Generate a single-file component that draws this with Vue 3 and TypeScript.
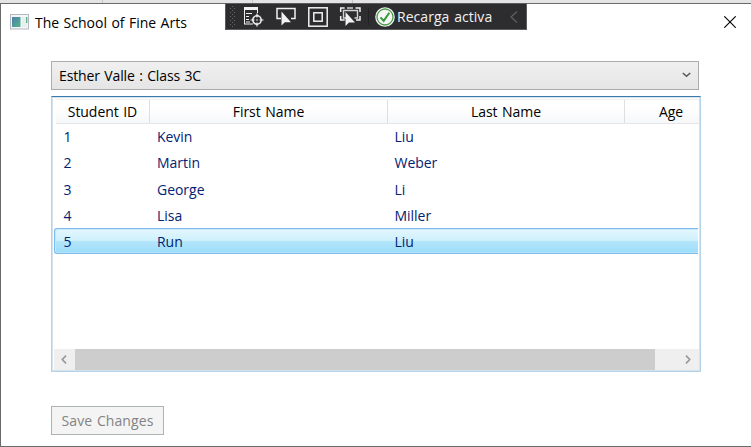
<script setup lang="ts">
import { ref } from 'vue'

interface Student {
  id: number
  first: string
  last: string
}

const students: Student[] = [
  { id: 1, first: 'Kevin', last: 'Liu' },
  { id: 2, first: 'Martin', last: 'Weber' },
  { id: 3, first: 'George', last: 'Li' },
  { id: 4, first: 'Lisa', last: 'Miller' },
  { id: 5, first: 'Run', last: 'Liu' },
]
const selected = ref(5)
</script>

<template>
  <div class="desktop">
    <div class="window">
      <header class="titlebar">
        <svg class="app-icon" width="19" height="16" viewBox="0 0 19 16">
          <defs>
            <linearGradient id="pane" x1="0" y1="0" x2="1" y2="1">
              <stop offset="0" stop-color="#4a7fae" />
              <stop offset="1" stop-color="#57b586" />
            </linearGradient>
          </defs>
          <rect x=".5" y=".5" width="18" height="14.5" fill="#f4f5f7" stroke="#b4b8c0" />
          <rect x="2" y="3" width="8.5" height="10" fill="url(#pane)" />
          <rect x="12" y="3" width="5" height="10" fill="#e9eeee" />
          <rect x="16" y="3" width="1.4" height="6" fill="#62b48d" />
        </svg>
        <h1>The School of Fine Arts</h1>
        <svg class="close" width="12" height="12" viewBox="0 0 12 12">
          <path d="M.3 .3 11.7 11.7M11.7 .3 .3 11.7" stroke="#000" stroke-width="1.1" />
        </svg>
      </header>

      <main>
        <div class="combo">
          <span>Esther Valle : Class 3C</span>
          <svg width="9" height="6" viewBox="0 0 9 6">
            <path d="M.8 1 4.500 4.300 8.200 1" fill="none" stroke="#5a5a5a" stroke-width="1.6" />
          </svg>
        </div>

        <section class="list">
          <div class="grid head">
            <div>Student ID</div>
            <div>First Name</div>
            <div>Last Name</div>
            <div>Age</div>
          </div>
          <div class="rows">
            <div
              v-for="s in students"
              :key="s.id"
              class="row"
              :class="{ selected: s.id === selected }"
              @click="selected = s.id"
            >
              <span>{{ s.id }}</span>
              <span>{{ s.first }}</span>
              <span>{{ s.last }}</span>
            </div>
          </div>
          <div class="scroll">
            <div class="arrow">
              <svg width="6" height="9" viewBox="0 0 6 9">
                <path d="M5 .6 1.3 4.5 5 8.4" fill="none" stroke="#999" stroke-width="1.7" />
              </svg>
            </div>
            <div class="thumb"></div>
            <div class="arrow end">
              <svg width="6" height="9" viewBox="0 0 6 9">
                <path d="M1 .6 4.7 4.5 1 8.4" fill="none" stroke="#999" stroke-width="1.7" />
              </svg>
            </div>
          </div>
        </section>

        <button class="save" disabled>Save Changes</button>
      </main>
    </div>

    <div class="debugbar">
      <svg class="tools" width="150" height="25" viewBox="0 0 150 25">
        <defs>
          <pattern id="grip" width="4" height="4" patternUnits="userSpaceOnUse">
            <rect width="1" height="1" fill="#66666a" />
            <rect x="2" y="2" width="1" height="1" fill="#66666a" />
          </pattern>
        </defs>
        <rect x="3" y="2" width="7" height="21" fill="url(#grip)" />
        <!-- live visual tree -->
        <g fill="none" stroke="#f1f1f1">
          <path d="M18 4.5h14" stroke-width="3" />
          <path d="M18.5 5v15M18 20h9M31.5 5v4" />
          <path d="M20 9.5h6M20 12.5h3M20 15.5h3M20 18h4" stroke-width="1" />
          <circle cx="31" cy="16" r="4.2" stroke-width="1.5" />
          <path d="M31 9.5v4M31 18.500v4M24.500 16h4M33.500 16h4" stroke-width="1.2" />
          <circle cx="31" cy="16" r=".8" fill="#f1f1f1" stroke="none" />
        </g>
        <!-- element picker -->
        <path d="M55 14.500h-4V4.500h18v10h-4" fill="none" stroke="#f1f1f1" stroke-width="1.5" />
        <path d="M55.500 7.500v14l3.300-3.300h6.200z" fill="#f1f1f1" />
        <!-- layout adorners -->
        <rect x="82.800" y="3.800" width="18.400" height="18.400" fill="none" stroke="#f1f1f1" stroke-width="1.500" />
        <rect x="87.800" y="8.800" width="8.400" height="8.400" fill="none" stroke="#f1f1f1" stroke-width="1.500" />
        <!-- focus tracking -->
        <path d="M114.700 8V4h4M129.500 4h4.500v4M114.700 12v4h4M134 12v4H130" fill="none" stroke="#f1f1f1" stroke-width="1.500" />
        <path d="M120 14h-2.500V6.500h14V14h-3M121 4h6" fill="none" stroke="#d2d2d2" stroke-width="1.400" />
        <path d="M119.500 8v14l3.500-3.500h6z" fill="#f1f1f1" />
        <path d="M142.500 4v17" stroke="#222224" />
      </svg>
      <svg class="check" width="20" height="20" viewBox="0 0 20 20">
        <circle cx="10" cy="10" r="9.800" fill="#f1f1f1" />
        <circle cx="10" cy="10" r="8" fill="#f6f6f6" stroke="#4a9f4a" stroke-width="1.300" />
        <path d="M5.500 10.300 8.700 13.800 14.300 5.800" fill="none" stroke="#339a35" stroke-width="2" />
      </svg>
      <span class="status">Recarga activa</span>
      <svg class="collapse" width="8" height="12" viewBox="0 0 8 12">
        <path d="M7 .5 1 6l6 5.500" fill="none" stroke="#606064" stroke-width="1.200" />
      </svg>
    </div>
  </div>
</template>

<style>
body {
  margin: 0;
  overflow: hidden;
}
</style>

<style scoped>
* {
  box-sizing: border-box;
}
.desktop {
  position: relative;
  width: 751px;
  height: 447px;
  padding-top: 3px;
  background:
    linear-gradient(#c6c6c6, #c6c6c6) 102px 0 / 1px 3px no-repeat,
    linear-gradient(#c6c6c6, #c6c6c6) 252px 0 / 1px 3px no-repeat,
    linear-gradient(#c6c6c6, #c6c6c6) 352px 0 / 1px 3px no-repeat,
    #e4e4e4;
  font: 14px/20px "Open Sans", "Noto Sans", sans-serif;
  color: #000;
}
.window {
  height: 444px;
  background: #fff;
  border: 1px solid #6a6a6a;
  border-right: 0;
}
.titlebar {
  display: flex;
  align-items: center;
  height: 36px;
  padding: 0 15px 0 9px;
}
.app-icon {
  margin-top: -1px;
}
h1 {
  margin: 1px 0 0 6px;
  font-size: 14px;
  font-weight: 400;
  line-height: 20px;
  word-spacing: 0.8px;
}
.close {
  margin-left: auto;
}
main {
  padding: 21px 0 0 50px;
}
.combo {
  display: flex;
  align-items: center;
  justify-content: space-between;
  width: 648px;
  height: 29px;
  padding: 0 7px 0 7px;
  border: 1px solid #acacac;
  background: linear-gradient(#f0f0f0, #e5e5e5);
  letter-spacing: -0.12px;
  word-spacing: 0.9px;
}
.combo svg {
  margin-top: -2px;
}
.list {
  width: 650px;
  height: 276px;
  margin-top: 6px;
  padding: 2px 1px 0 2px;
  border: 1px solid #b5d3e7;
  border-top-color: #3d7bad;
  box-shadow: inset 0 0 0 1px #d3e2ec;
  display: flex;
  flex-direction: column;
}
.grid {
  display: grid;
  grid-template-columns: 94px 238px 237px 93px;
}
.head {
  width: 643px;
  height: 25px;
  margin-left: 2px;
  overflow: hidden;
  border-top: 1px solid #f0f0f0;
  border-bottom: 1px solid #e3e5e8;
  background: linear-gradient(#fff 30%, #f6f7f9);
  letter-spacing: -0.05px;
  word-spacing: 1px;
}
.head > div {
  padding-top: 2px;
  text-align: center;
  border-right: 1px solid #dedfe1;
}
.rows {
  flex: 1;
}
.row {
  display: grid;
  grid-template-columns: 93.5px 237.5px 1fr;
  height: 26.25px;
  padding: 3px 0 0 9.5px;
  color: #042271;
  letter-spacing: -0.03px;
}
.row.selected {
  height: 26px;
  margin: -1px 1px 0 0;
  padding: 3px 0 0 8.5px;
  border: 1px solid #7ebbed;
  border-right: 0;
  border-radius: 3px 0 0 3px;
  box-shadow: inset 1px 1px #c9e9f8, inset 0 -1px #b9e4f8;
  background: linear-gradient(#e2f6fd 0 5%, #ccf0fc 50%, #b5e6fa 50%, #9bddfb);
}
.scroll {
  display: flex;
  height: 21px;
  width: 645px;
  margin-bottom: 1px;
  background: #efefef;
}
.arrow {
  display: flex;
  align-items: center;
  justify-content: center;
  width: 21px;
  padding-right: 2px;
}
.arrow.end {
  margin-left: auto;
}
.thumb {
  width: 580px;
  background: #cdcdcd;
}
.save {
  display: block;
  width: 113px;
  height: 29px;
  margin-top: 34px;
  padding: 0;
  border: 1px solid #adb2b5;
  background: #f4f4f4;
  color: #838383;
  font: inherit;
  letter-spacing: 0.08px;
  word-spacing: 1px;
}
.debugbar {
  position: absolute;
  left: 225px;
  top: 3px;
  width: 302px;
  height: 27px;
  display: flex;
  align-items: center;
  border: 1px solid #5b5b5d;
  background: #2d2d30;
  color: #f1f1f1;
}
.check {
  margin-left: -1px;
}
.status {
  margin-left: 2px;
  letter-spacing: 0.05px;
  word-spacing: 1px;
}
.collapse {
  margin: 1px 8px 0 auto;
}
</style>
